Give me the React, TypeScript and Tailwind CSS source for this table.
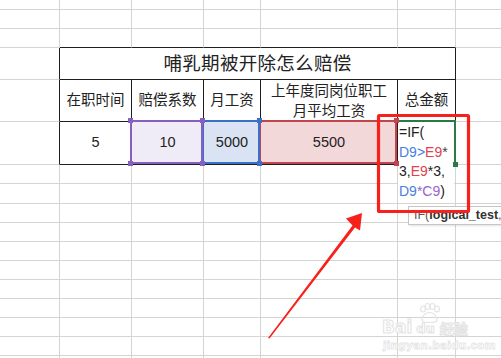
import React from "react";

type Edge = "g" | "k" | "n";

const rEdge: Record<Edge, string> = {
  g: "border-r border-r-[#d4d4d4]",
  k: "border-r border-r-[#1e1e1e]",
  n: "",
};
const bEdge: Record<Edge, string> = {
  g: "border-b border-b-[#d4d4d4]",
  k: "border-b border-b-[#1e1e1e]",
  n: "",
};

function Cell(props: { r?: Edge; b?: Edge; className?: string; children?: React.ReactNode }) {
  const { r = "g", b = "g", className = "", children } = props;
  return <div className={`relative ${rEdge[r]} ${bEdge[b]} ${className}`}>{children}</div>;
}

// little square handles on the corners of a referenced range
function Corners({ color, z }: { color: string; z: string }) {
  return (
    <div className={`absolute -left-[2px] -top-[2px] right-0 bottom-0 ${z}`}>
      <span className={`absolute -left-[2px] -top-[2px] w-[5px] h-[5px] ${color}`} />
      <span className={`absolute -right-[2px] -top-[2px] w-[5px] h-[5px] ${color}`} />
      <span className={`absolute -left-[2px] -bottom-[2px] w-[5px] h-[5px] ${color}`} />
      <span className={`absolute -right-[2px] -bottom-[2px] w-[5px] h-[5px] ${color}`} />
    </div>
  );
}

const blankRow = (k: string) => (
  <React.Fragment key={k}>
    {[0, 1, 2, 3, 4, 5, 6].map((i) => (
      <Cell key={i} r={i === 6 ? "n" : "g"} />
    ))}
  </React.Fragment>
);

export default function App() {
  const cjk = "font-['Liberation_Sans','Noto_Sans_CJK_SC',sans-serif]";
  return (
    <div className={`relative w-[501px] h-[358px] overflow-hidden bg-white text-[#222] ${cjk}`}>
      <div className="grid grid-cols-[60px_72px_72px_57px_137px_58px_45px] grid-rows-[10px_19px_19px_32px_42px_43px_19px_20px_19px_19px_19px_19px_19px_19px_19px_19px_19px]">
        {blankRow("r0")}
        {blankRow("r1")}

        {/* row above the table: bottom edge is the table's top border */}
        <Cell />
        <Cell b="k" />
        <Cell b="k" />
        <Cell b="k" />
        <Cell b="k" />
        <Cell b="k" />
        <Cell r="n" />

        {/* title */}
        <Cell r="k" />
        <Cell r="k" b="k" className="col-span-5 flex items-center justify-center text-[18.5px] tracking-[0.3px]">
          哺乳期被开除怎么赔偿
        </Cell>
        <Cell r="n" />

        {/* header */}
        <Cell r="k" />
        <Cell r="k" b="k" className="flex items-center justify-center text-[14.5px]">在职时间</Cell>
        <Cell r="k" b="k" className="flex items-center justify-center text-[14.5px]">赔偿系数</Cell>
        <Cell r="k" b="k" className="flex items-center justify-center text-[14.5px]">月工资</Cell>
        <Cell r="k" b="k" className="flex flex-col items-center justify-center text-[14.5px] leading-[20px]">
          <span>上年度同岗位职工</span>
          <span>月平均工资</span>
        </Cell>
        <Cell r="k" b="k" className="flex items-center justify-center text-[14.5px]">总金额</Cell>
        <Cell r="n" />

        {/* data */}
        <Cell r="k" />
        <Cell r="k" b="k" className="flex items-center justify-center text-[14.5px]">5</Cell>
        <Cell r="k" b="k" className="flex items-center justify-center text-[14.5px]">
          <div className="absolute inset-0 bg-[#efecf7]" />
          <div className="absolute -left-[2px] -top-[2px] right-0 bottom-0 border-2 border-[#8760bf] z-30" />
          <Corners color="bg-[#8760bf]" z="z-30" />
          <span className="relative">10</span>
        </Cell>
        <Cell r="k" b="k" className="flex items-center justify-center text-[14.5px]">
          <div className="absolute inset-0 bg-[#d9e3f3]" />
          <div className="absolute -left-[2px] -top-[2px] right-0 bottom-0 border-2 border-[#3b70c6] z-20" />
          <Corners color="bg-[#3b70c6]" z="z-20" />
          <span className="relative">5000</span>
        </Cell>
        <Cell r="k" b="k" className="flex items-center justify-center text-[14.5px]">
          <div className="absolute inset-0 bg-[#f3d8da]" />
          <div className="absolute -left-[2px] -top-[2px] right-0 bottom-0 border-2 border-[#c1444e] z-10" />
          <Corners color="bg-[#c1444e]" z="z-10" />
          <span className="relative">5500</span>
        </Cell>
        <Cell r="k" b="k">
          {/* cell being edited: the formula spills down over the rows below */}
          <div className="absolute left-0 top-0 w-[56px] h-[75px] bg-white z-[5] pl-[1px] pt-[1px] text-[14px] leading-[19.5px] whitespace-nowrap">
            <div>=IF(</div>
            <div>
              <span className="text-[#4a7fe0]">D9&gt;</span>
              <span className="text-[#e0424f]">E9</span>
              <span className="text-[#444]">*</span>
            </div>
            <div>
              3,<span className="text-[#e0424f]">E9</span>*3,
            </div>
            <div>
              <span className="text-[#4a7fe0]">D9</span>
              <span className="text-[#8d6cc0]">*</span>
              <span className="text-[#9a62d0]">C9</span>)
            </div>
          </div>
          <div className="absolute -left-[1px] -top-[2px] right-0 h-[2px] bg-[#2b7a46] z-[6]" />
          <div className="absolute -right-[1px] -top-[2px] w-[2px] bottom-0 bg-[#2b7a46] z-[6]" />
          <span className="absolute -right-[3px] -bottom-[3px] w-[5px] h-[5px] bg-[#2b7a46] z-[6]" />
        </Cell>
        <Cell r="n" />

        {Array.from({ length: 11 }).map((_, i) => blankRow("b" + i))}
      </div>

      {/* function hint tooltip, runs off the right edge like in excel */}
      <div className="absolute left-[408px] top-[206px] w-[110px] h-[19px] bg-white border border-[#c6c6c6] shadow-[1px_1px_2px_rgba(0,0,0,0.12)] pl-[5px] text-[12.5px] leading-[17px] text-[#555] whitespace-nowrap z-40">
        IF(<span className="font-bold text-[#333]">logical_test</span>,
      </div>

      {/* baidu jingyan watermark */}
      <div className="absolute left-[382px] top-[300px] w-[95px] h-[52px] z-40 pointer-events-none">
        <svg className="absolute left-[36px] top-[3px]" width="22" height="20" viewBox="0 0 22 20" fill="none" stroke="#e4e4e4" strokeWidth="1.2">
          <ellipse cx="5" cy="6" rx="2.4" ry="3" />
          <ellipse cx="9.5" cy="3.5" rx="2.4" ry="3" />
          <ellipse cx="14.5" cy="3.5" rx="2.4" ry="3" />
          <ellipse cx="19" cy="6" rx="2.4" ry="3" />
          <path d="M4 17 C4 12 8 9.5 11.5 9.5 C15 9.5 19 12 19 17 C19 19 16 19.5 11.5 19.5 C7 19.5 4 19 4 17 Z" />
        </svg>
        <div className="absolute left-0 top-[18px] flex items-end font-['DejaVu_Sans',sans-serif] font-bold text-[17px] leading-[18px] text-white [-webkit-text-stroke:1px_#e3e3e3]">
          <span>Bai</span>
          <span className="ml-[4px] text-[13px] leading-[15px]">du</span>
          <span className="ml-[5px] text-[14px] leading-[16px] font-['Noto_Sans_CJK_SC',sans-serif]">经验</span>
        </div>
        <div className="absolute left-[1px] top-[38px] font-['DejaVu_Sans',sans-serif] font-bold text-[10.5px] tracking-[0.2px] text-white [-webkit-text-stroke:0.8px_#e5e5e5]">
          jingyan.baidu.com
        </div>
      </div>

      {/* red annotation: box + arrow */}
      <svg className="absolute left-0 top-0 z-50 pointer-events-none" width="501" height="358" viewBox="0 0 501 358">
        <rect x="378.5" y="115.5" width="90" height="96" fill="none" stroke="#f7201b" strokeWidth="3.2" rx="1" />
        <polygon
          fill="#f7201b"
          points="268,338 352.5,225.5 346,218.5 362,213 360,230.5 355,227.5 269.5,338.5"
        />
      </svg>
    </div>
  );
}
